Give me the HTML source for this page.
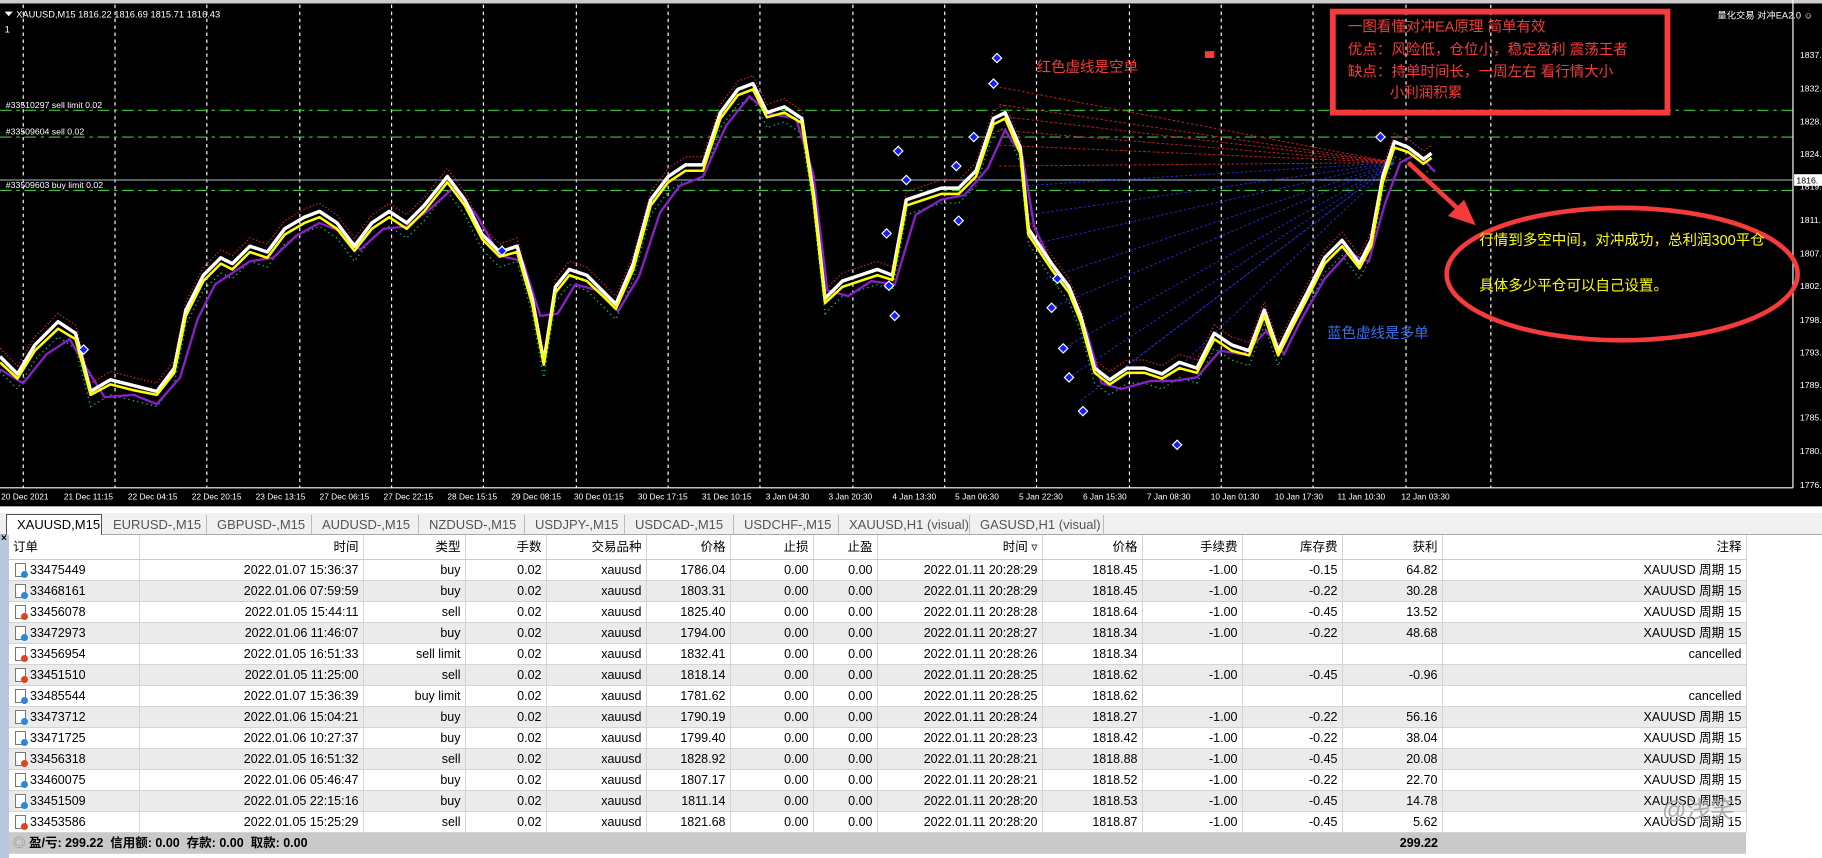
<!DOCTYPE html>
<html><head><meta charset="utf-8">
<style>
*{margin:0;padding:0;box-sizing:border-box}
body{width:1822px;height:858px;overflow:hidden;background:#fff;font-family:"Liberation Sans","Noto Sans CJK SC",sans-serif;position:relative}
#chart{position:absolute;left:0;top:0;width:1822px;height:511px;background:#000}
#tabs{position:absolute;left:0;top:511px;width:1822px;height:24px;background:#f0f0f0;border-top:2px solid #fff;border-bottom:1px solid #aaa;font-size:13px;color:#555}
.tab{position:absolute;top:2px;height:20px;line-height:19px;padding-left:10px;border-right:1px solid #bbb}
.tab.act{background:#fff;border:1px solid #555;border-bottom:none;color:#000;top:1px;height:22px}
#side{position:absolute;left:0;top:535px;width:9px;height:323px;background:#b7c7dc}
#tbl{position:absolute;left:9px;top:535px;border-collapse:collapse;table-layout:fixed;font-size:12.5px;color:#000}
#tbl td{height:20.9px;line-height:20px;padding:0 4px;text-align:right;border-right:1px solid #d4d4d4;border-bottom:1px solid #d4d4d4;white-space:nowrap;overflow:hidden}
#tbl tr.h td{height:24px;background:#fff;border-bottom:1px solid #ccc}
#tbl tr.g td{background:#ebebeb}
#tbl td.l{text-align:left}
#tbl tr.f td{background:#c9c9c9;font-weight:bold;border-right:none}
.ic{display:inline-block;width:11px;height:14px;border:1px solid #777;background:#fff;position:relative;vertical-align:-3px;margin:0 4px 0 2px}
.ic i{position:absolute;right:-3px;bottom:-2px;width:7px;height:7px;border-radius:50%}
.b i{background:#2d86d8}.r i{background:#e5421c}
</style></head><body>
<svg id="chart" viewBox="0 0 1568 440" preserveAspectRatio="none" xmlns="http://www.w3.org/2000/svg" font-family="Liberation Sans, Noto Sans CJK SC, sans-serif">
<rect x="0" y="0" width="1568" height="440" fill="#000"/>
<rect x="0" y="0" width="1568" height="3" fill="#ccc"/>
<g stroke="#fff" stroke-width="1" stroke-dasharray="3,3">
<line x1="20" y1="4" x2="20" y2="420"/><line x1="99" y1="4" x2="99" y2="420"/><line x1="178" y1="4" x2="178" y2="420"/><line x1="258" y1="4" x2="258" y2="420"/><line x1="337" y1="4" x2="337" y2="420"/><line x1="416" y1="4" x2="416" y2="420"/><line x1="496" y1="4" x2="496" y2="420"/><line x1="575" y1="4" x2="575" y2="420"/><line x1="654" y1="4" x2="654" y2="420"/><line x1="734" y1="4" x2="734" y2="420"/><line x1="813" y1="4" x2="813" y2="420"/><line x1="892" y1="4" x2="892" y2="420"/><line x1="972" y1="4" x2="972" y2="420"/><line x1="1051" y1="4" x2="1051" y2="420"/><line x1="1130" y1="4" x2="1130" y2="420"/><line x1="1210" y1="4" x2="1210" y2="420"/><line x1="1283" y1="4" x2="1283" y2="420"/>
</g>
<line x1="0" y1="155" x2="1543" y2="155" stroke="#8a9aa8" stroke-width="1"/>
<g stroke="#3cc83c" stroke-width="1" stroke-dasharray="10,4,3,4">
<line x1="0" y1="95" x2="1543" y2="95"/><line x1="0" y1="118" x2="1543" y2="118"/><line x1="0" y1="164" x2="1543" y2="164"/>
</g>
<g fill="#fff" font-size="7.5">
<text x="5" y="93">#33510297 sell limit 0.02</text>
<text x="5" y="116">#33509604 sell 0.02</text>
<text x="5" y="162">#33509603 buy limit 0.02</text>
<text x="14" y="15" font-size="8">XAUUSD,M15  1816.22 1816.69 1815.71 1816.43</text>
<text x="4" y="28" font-size="8">1</text>
</g>
<path d="M4 10 L11 10 L7.5 14Z" fill="#fff"/>
<g stroke="#e02020" stroke-width="0.8" stroke-dasharray="2,2" fill="none">
<line x1="860" y1="75" x2="1200" y2="140"/><line x1="860" y1="90" x2="1200" y2="140"/><line x1="860" y1="100" x2="1200" y2="140"/><line x1="860" y1="112" x2="1200" y2="140"/><line x1="860" y1="125" x2="1200" y2="140"/><line x1="860" y1="143" x2="1200" y2="140"/>
</g>
<g stroke="#2030e0" stroke-width="0.8" stroke-dasharray="2,2" fill="none">
<line x1="880" y1="160" x2="1200" y2="140"/><line x1="885" y1="185" x2="1200" y2="140"/><line x1="890" y1="210" x2="1200" y2="140"/><line x1="900" y1="240" x2="1200" y2="140"/><line x1="905" y1="265" x2="1200" y2="140"/><line x1="915" y1="300" x2="1200" y2="140"/><line x1="920" y1="325" x2="1200" y2="140"/><line x1="930" y1="345" x2="1200" y2="140"/><line x1="950" y1="330" x2="1200" y2="140"/><line x1="1000" y1="330" x2="1200" y2="140"/>
</g>
<polyline fill="none" stroke="#e02020" stroke-width="1.2" stroke-dasharray="1,2" points="0,300 15,315 30,290 50,270 65,280 78,330 95,320 115,325 135,330 150,310 160,260 175,230 190,215 200,220 215,205 230,210 245,190 262,180 275,175 290,185 305,205 320,185 335,175 350,185 365,170 385,145 400,165 415,195 430,210 445,205 458,250 468,305 478,240 490,225 505,230 520,245 530,255 545,220 560,165 575,145 590,135 605,135 620,90 635,70 648,65 660,90 675,85 690,95 700,160 710,250 725,235 740,230 755,225 768,230 780,165 795,160 810,155 825,155 840,140 855,95 865,90 878,120 885,190 895,205 905,220 920,240 930,265 942,310 955,320 970,310 985,310 1000,315 1015,305 1030,310 1045,280 1060,290 1075,295 1088,260 1100,295 1112,270 1125,245 1140,215 1155,200 1170,220 1180,200 1190,145 1200,115 1212,120 1225,130 1232,125"/>
<polyline fill="none" stroke="#00d070" stroke-width="1.2" stroke-dasharray="1,3" points="0,320 15,335 30,310 50,290 65,300 78,350 95,340 115,345 135,350 150,330 160,280 175,250 190,235 200,240 215,225 230,230 245,210 262,200 275,195 290,205 305,225 320,205 335,195 350,205 365,190 385,165 400,185 415,215 430,230 445,225 458,270 468,325 478,260 490,245 505,250 520,265 530,275 545,240 560,185 575,165 590,155 605,155 620,110 635,90 648,85 660,110 675,105 690,115 700,180 710,270 725,255 740,250 755,245 768,250 780,185 795,180 810,175 825,175 840,160 855,115 865,110 878,140 885,210 895,225 905,240 920,260 930,285 942,330 955,340 970,330 985,330 1000,335 1015,325 1030,330 1045,300 1060,310 1075,315 1088,280 1100,315 1112,290 1125,265 1140,235 1155,220 1170,240 1180,220 1190,165 1200,135 1212,140 1225,150 1232,145"/>
<polyline fill="none" stroke="#8a1fc8" stroke-width="2" points="0,318 20,330 40,305 60,292 75,318 90,342 115,340 135,348 155,325 170,275 185,245 200,235 215,225 235,222 255,203 275,192 295,200 310,215 330,197 350,195 370,180 390,162 410,185 430,220 450,225 465,272 480,270 495,245 515,250 532,268 550,238 568,183 585,160 605,152 625,108 645,83 662,98 685,102 700,150 712,250 730,255 750,242 770,245 788,185 810,172 830,168 850,145 865,112 880,135 890,195 905,228 920,250 935,285 948,330 965,335 990,328 1010,328 1030,325 1050,302 1070,305 1090,285 1105,305 1120,275 1140,240 1160,218 1178,225 1192,175 1205,140 1220,132 1235,148"/>
<polyline fill="none" stroke="#fff" stroke-width="3" stroke-linejoin="round" points="0,307 15,322 30,297 50,277 65,287 78,337 95,327 115,332 135,337 150,317 160,267 175,237 190,222 200,227 215,212 230,217 245,197 262,187 275,182 290,192 305,212 320,192 335,182 350,192 365,177 385,152 400,172 415,202 430,217 445,212 458,257 468,312 478,247 490,232 505,237 520,252 530,262 545,227 560,172 575,152 590,142 605,142 620,97 635,77 648,72 660,97 675,92 690,102 700,167 710,257 725,242 740,237 755,232 768,237 780,172 795,167 810,162 825,162 840,147 855,102 865,97 878,127 885,197 895,212 905,227 920,247 930,272 942,317 955,327 970,317 985,317 1000,322 1015,312 1030,317 1045,287 1060,297 1075,302 1088,267 1100,302 1112,277 1125,252 1140,222 1155,207 1170,227 1180,207 1190,152 1200,122 1212,127 1225,137 1232,132"/>
<polyline fill="none" stroke="#ffff00" stroke-width="2.2" stroke-linejoin="round" points="0,312 15,326 30,302 50,283 65,292 78,340 95,331 115,336 135,340 150,321 160,272 175,242 190,227 200,232 215,217 230,222 245,202 262,192 275,187 290,197 305,216 320,197 335,187 350,197 365,182 385,157 400,177 415,206 430,221 445,217 458,262 468,314 478,252 490,237 505,242 520,256 530,266 545,232 560,177 575,157 590,147 605,147 620,102 635,82 648,77 660,101 675,97 690,106 700,171 710,261 725,247 740,242 755,237 768,241 780,177 795,172 810,167 825,167 840,152 855,107 865,102 878,132 885,202 895,217 905,232 920,252 930,277 942,321 955,331 970,321 985,321 1000,326 1015,317 1030,321 1045,292 1060,302 1075,306 1088,272 1100,306 1112,282 1125,257 1140,227 1155,212 1170,231 1180,212 1190,157 1200,127 1212,131 1225,141 1232,136"/>
<g fill="#1020ff" stroke="#fff" stroke-width="1">
<path d="M773 126l4 4-4 4-4-4z"/><path d="M780 151l4 4-4 4-4-4z"/><path d="M763 197l4 4-4 4-4-4z"/><path d="M765 242l4 4-4 4-4-4z"/><path d="M770 268l4 4-4 4-4-4z"/><path d="M823 139l4 4-4 4-4-4z"/><path d="M838 114l4 4-4 4-4-4z"/><path d="M855 68l4 4-4 4-4-4z"/><path d="M858 46l4 4-4 4-4-4z"/><path d="M905 261l4 4-4 4-4-4z"/><path d="M910 236l4 4-4 4-4-4z"/><path d="M915 296l4 4-4 4-4-4z"/><path d="M920 321l4 4-4 4-4-4z"/><path d="M932 350l4 4-4 4-4-4z"/><path d="M1013 379l4 4-4 4-4-4z"/><path d="M1188 114l4 4-4 4-4-4z"/><path d="M825 186l4 4-4 4-4-4z"/><path d="M432 212l4 4-4 4-4-4z"/><path d="M72 297l4 4-4 4-4-4z"/>
</g>
<line x1="1543" y1="0" x2="1543" y2="420" stroke="#fff"/>
<line x1="0" y1="420" x2="1543" y2="420" stroke="#fff"/>
<g fill="#fff" font-size="7.5">
<text x="1549" y="50">1837.</text><text x="1549" y="79">1832.</text><text x="1549" y="107">1828.</text><text x="1549" y="135">1824.</text><text x="1549" y="163">1819.</text><text x="1549" y="192">1811.</text><text x="1549" y="221">1807.</text><text x="1549" y="249">1802.</text><text x="1549" y="278">1798.</text><text x="1549" y="306">1793.</text><text x="1549" y="334">1789.</text><text x="1549" y="362">1785.</text><text x="1549" y="391">1780.</text><text x="1549" y="420">1776.</text>
</g>
<rect x="1544" y="150" width="24" height="10" fill="#fff"/><text x="1546" y="158" font-size="7.5" fill="#000">1816.</text>
<g fill="#fff" font-size="7.2">
<text x="1" y="430">20 Dec 2021</text><text x="55" y="430">21 Dec 11:15</text><text x="110" y="430">22 Dec 04:15</text><text x="165" y="430">22 Dec 20:15</text><text x="220" y="430">23 Dec 13:15</text><text x="275" y="430">27 Dec 06:15</text><text x="330" y="430">27 Dec 22:15</text><text x="385" y="430">28 Dec 15:15</text><text x="440" y="430">29 Dec 08:15</text><text x="494" y="430">30 Dec 01:15</text><text x="549" y="430">30 Dec 17:15</text><text x="604" y="430">31 Dec 10:15</text><text x="659" y="430">3 Jan 04:30</text><text x="713" y="430">3 Jan 20:30</text><text x="768" y="430">4 Jan 13:30</text><text x="822" y="430">5 Jan 06:30</text><text x="877" y="430">5 Jan 22:30</text><text x="932" y="430">6 Jan 15:30</text><text x="987" y="430">7 Jan 08:30</text><text x="1042" y="430">10 Jan 01:30</text><text x="1097" y="430">10 Jan 17:30</text><text x="1151" y="430">11 Jan 10:30</text><text x="1206" y="430">12 Jan 03:30</text>
</g>
<rect x="0" y="436" width="1568" height="4" fill="#fff"/>
<rect x="1147" y="10" width="288" height="87" fill="none" stroke="#f53b3b" stroke-width="5"/>
<g fill="#f53b3b" font-size="12.5">
<text x="1160" y="27">一图看懂对冲EA原理  简单有效</text>
<text x="1160" y="47">优点：风险低，仓位小，稳定盈利 震荡王者</text>
<text x="1160" y="66">缺点：持单时间长，一周左右 看行情大小</text>
<text x="1196" y="84">小利润积累</text>
<text x="892" y="62" font-size="12.5">红色虚线是空单</text>
</g>
<rect x="1037" y="44" width="8" height="6" fill="#f53b3b"/>
<text x="1478" y="16" fill="#fff" font-size="8">量化交易 对冲EA2.0 ☺</text>
<text x="1142" y="291" fill="#3a6ee8" font-size="12.5">蓝色虚线是多单</text>
<line x1="1212" y1="140" x2="1255" y2="180" stroke="#f53b3b" stroke-width="4"/>
<path d="M1270 194 L1246 186 L1260 172 Z" fill="#f53b3b"/>
<ellipse cx="1396" cy="236" rx="151" ry="57" fill="none" stroke="#f53b3b" stroke-width="4"/>
<g fill="#ffff00" font-size="12.5">
<text x="1273" y="211">行情到多空中间，对冲成功，总利润300平仓</text>
<text x="1273" y="250">具体多少平仓可以自己设置。</text>
</g>
</svg>
<div id="tabs">
<div class="tab act" style="left:6px;width:96px">XAUUSD,M15</div>
<div class="tab" style="left:103px;width:104px">EURUSD-,M15</div>
<div class="tab" style="left:207px;width:105px">GBPUSD-,M15</div>
<div class="tab" style="left:312px;width:107px">AUDUSD-,M15</div>
<div class="tab" style="left:419px;width:106px">NZDUSD-,M15</div>
<div class="tab" style="left:525px;width:100px">USDJPY-,M15</div>
<div class="tab" style="left:625px;width:109px">USDCAD-,M15</div>
<div class="tab" style="left:734px;width:105px">USDCHF-,M15</div>
<div class="tab" style="left:839px;width:131px">XAUUSD,H1 (visual)</div>
<div class="tab" style="left:970px;width:134px">GASUSD,H1 (visual)</div>
</div>
<div id="side"><span style="position:absolute;left:1px;top:-2px;font-size:10px;font-weight:bold">×</span></div>
<table id="tbl">
<colgroup><col style="width:130px"><col style="width:224px"><col style="width:102px"><col style="width:81px"><col style="width:100px"><col style="width:84px"><col style="width:83px"><col style="width:64px"><col style="width:165px"><col style="width:100px"><col style="width:100px"><col style="width:100px"><col style="width:100px"><col style="width:304px"></colgroup>
<tr class="h"><td class="l">订单</td><td>时间</td><td>类型</td><td>手数</td><td>交易品种</td><td>价格</td><td>止损</td><td>止盈</td><td>时间 ▿</td><td>价格</td><td>手续费</td><td>库存费</td><td>获利</td><td>注释</td></tr>
<tr><td class="l"><span class="ic b"><i></i></span>33475449</td><td>2022.01.07 15:36:37</td><td>buy</td><td>0.02</td><td>xauusd</td><td>1786.04</td><td>0.00</td><td>0.00</td><td>2022.01.11 20:28:29</td><td>1818.45</td><td>-1.00</td><td>-0.15</td><td>64.82</td><td>XAUUSD 周期 15</td></tr>
<tr class="g"><td class="l"><span class="ic b"><i></i></span>33468161</td><td>2022.01.06 07:59:59</td><td>buy</td><td>0.02</td><td>xauusd</td><td>1803.31</td><td>0.00</td><td>0.00</td><td>2022.01.11 20:28:29</td><td>1818.45</td><td>-1.00</td><td>-0.22</td><td>30.28</td><td>XAUUSD 周期 15</td></tr>
<tr><td class="l"><span class="ic r"><i></i></span>33456078</td><td>2022.01.05 15:44:11</td><td>sell</td><td>0.02</td><td>xauusd</td><td>1825.40</td><td>0.00</td><td>0.00</td><td>2022.01.11 20:28:28</td><td>1818.64</td><td>-1.00</td><td>-0.45</td><td>13.52</td><td>XAUUSD 周期 15</td></tr>
<tr class="g"><td class="l"><span class="ic b"><i></i></span>33472973</td><td>2022.01.06 11:46:07</td><td>buy</td><td>0.02</td><td>xauusd</td><td>1794.00</td><td>0.00</td><td>0.00</td><td>2022.01.11 20:28:27</td><td>1818.34</td><td>-1.00</td><td>-0.22</td><td>48.68</td><td>XAUUSD 周期 15</td></tr>
<tr><td class="l"><span class="ic r"><i></i></span>33456954</td><td>2022.01.05 16:51:33</td><td>sell limit</td><td>0.02</td><td>xauusd</td><td>1832.41</td><td>0.00</td><td>0.00</td><td>2022.01.11 20:28:26</td><td>1818.34</td><td></td><td></td><td></td><td>cancelled</td></tr>
<tr class="g"><td class="l"><span class="ic r"><i></i></span>33451510</td><td>2022.01.05 11:25:00</td><td>sell</td><td>0.02</td><td>xauusd</td><td>1818.14</td><td>0.00</td><td>0.00</td><td>2022.01.11 20:28:25</td><td>1818.62</td><td>-1.00</td><td>-0.45</td><td>-0.96</td><td></td></tr>
<tr><td class="l"><span class="ic b"><i></i></span>33485544</td><td>2022.01.07 15:36:39</td><td>buy limit</td><td>0.02</td><td>xauusd</td><td>1781.62</td><td>0.00</td><td>0.00</td><td>2022.01.11 20:28:25</td><td>1818.62</td><td></td><td></td><td></td><td>cancelled</td></tr>
<tr class="g"><td class="l"><span class="ic b"><i></i></span>33473712</td><td>2022.01.06 15:04:21</td><td>buy</td><td>0.02</td><td>xauusd</td><td>1790.19</td><td>0.00</td><td>0.00</td><td>2022.01.11 20:28:24</td><td>1818.27</td><td>-1.00</td><td>-0.22</td><td>56.16</td><td>XAUUSD 周期 15</td></tr>
<tr><td class="l"><span class="ic b"><i></i></span>33471725</td><td>2022.01.06 10:27:37</td><td>buy</td><td>0.02</td><td>xauusd</td><td>1799.40</td><td>0.00</td><td>0.00</td><td>2022.01.11 20:28:23</td><td>1818.42</td><td>-1.00</td><td>-0.22</td><td>38.04</td><td>XAUUSD 周期 15</td></tr>
<tr class="g"><td class="l"><span class="ic r"><i></i></span>33456318</td><td>2022.01.05 16:51:32</td><td>sell</td><td>0.02</td><td>xauusd</td><td>1828.92</td><td>0.00</td><td>0.00</td><td>2022.01.11 20:28:21</td><td>1818.88</td><td>-1.00</td><td>-0.45</td><td>20.08</td><td>XAUUSD 周期 15</td></tr>
<tr><td class="l"><span class="ic b"><i></i></span>33460075</td><td>2022.01.06 05:46:47</td><td>buy</td><td>0.02</td><td>xauusd</td><td>1807.17</td><td>0.00</td><td>0.00</td><td>2022.01.11 20:28:21</td><td>1818.52</td><td>-1.00</td><td>-0.22</td><td>22.70</td><td>XAUUSD 周期 15</td></tr>
<tr class="g"><td class="l"><span class="ic b"><i></i></span>33451509</td><td>2022.01.05 22:15:16</td><td>buy</td><td>0.02</td><td>xauusd</td><td>1811.14</td><td>0.00</td><td>0.00</td><td>2022.01.11 20:28:20</td><td>1818.53</td><td>-1.00</td><td>-0.45</td><td>14.78</td><td>XAUUSD 周期 15</td></tr>
<tr><td class="l"><span class="ic r"><i></i></span>33453586</td><td>2022.01.05 15:25:29</td><td>sell</td><td>0.02</td><td>xauusd</td><td>1821.68</td><td>0.00</td><td>0.00</td><td>2022.01.11 20:28:20</td><td>1818.87</td><td>-1.00</td><td>-0.45</td><td>5.62</td><td>XAUUSD 周期 15</td></tr>
<tr class="f"><td class="l" colspan="5"><span style="color:#888;font-weight:normal">◎</span> 盈/亏: 299.22&nbsp; 信用额: 0.00&nbsp; 存款: 0.00&nbsp; 取款: 0.00</td><td></td><td></td><td></td><td></td><td></td><td></td><td></td><td>299.22</td><td></td></tr>
</table>
<div style="position:absolute;left:1662px;top:790px;font-size:24px;color:#aaa">@浅笑</div>
</body></html>
